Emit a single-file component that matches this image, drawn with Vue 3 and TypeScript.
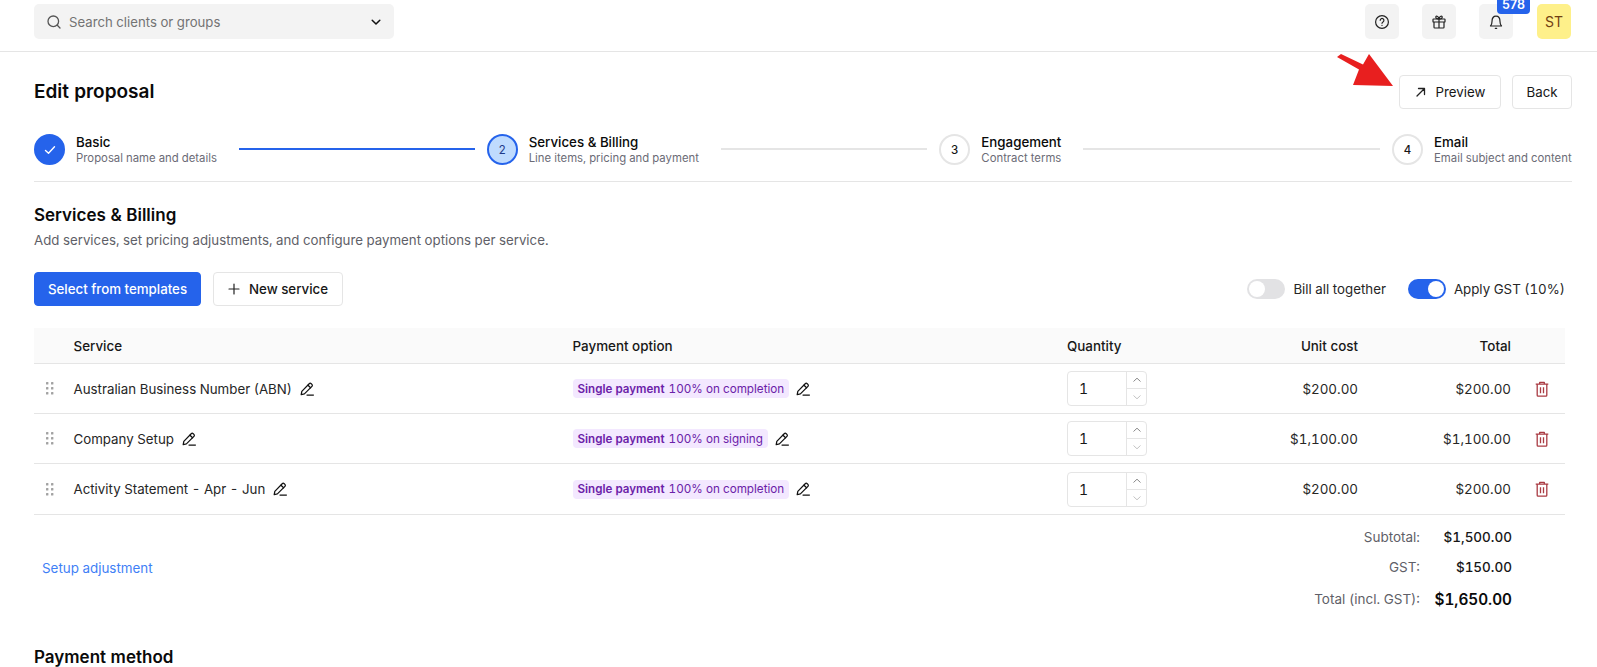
<script setup lang="ts">
interface Row { name: string; option: string; unit: string; total: string }
interface Step { n: number; title: string; sub: string; state: 'done' | 'active' | 'todo' }

const steps: Step[] = [
  { n: 1, title: 'Basic', sub: 'Proposal name and details', state: 'done' },
  { n: 2, title: 'Services & Billing', sub: 'Line items, pricing and payment', state: 'active' },
  { n: 3, title: 'Engagement', sub: 'Contract terms', state: 'todo' },
  { n: 4, title: 'Email', sub: 'Email subject and content', state: 'todo' },
]
const rows: Row[] = [
  { name: 'Australian Business Number (ABN)', option: '100% on completion', unit: '$200.00', total: '$200.00' },
  { name: 'Company Setup', option: '100% on signing', unit: '$1,100.00', total: '$1,100.00' },
  { name: 'Activity Statement - Apr - Jun', option: '100% on completion', unit: '$200.00', total: '$200.00' },
]
const dots = [[0, 0], [5, 0], [0, 5], [5, 5], [0, 10], [5, 10]]
</script>

<template>
  <div class="page">
    <header class="topbar">
      <div class="search">
        <svg class="search-ic" width="16" height="16" viewBox="0 0 16 16" fill="none" stroke="#555" stroke-width="1.3" stroke-linecap="round"><circle cx="7.3" cy="7.3" r="5.3"/><path d="M11.3 11.3 14 14"/></svg>
        <span class="search-text">Search clients or groups</span>
        <svg width="12" height="12" viewBox="0 0 12 12" fill="none" stroke="#111" stroke-width="1.5" stroke-linecap="round" stroke-linejoin="round"><path d="M2.2 4.2 6 8l3.8-3.8"/></svg>
      </div>
      <div class="top-actions">
        <button class="icon-btn">
          <svg width="16" height="16" viewBox="0 0 16 16" fill="none" stroke="#222" stroke-width="1.2" stroke-linecap="round"><circle cx="8" cy="8" r="6.4"/><path d="M6.2 6.3a1.85 1.85 0 1 1 2.8 1.6c-.6.4-1 .7-1 1.4"/><path d="M8 11.4v.1"/></svg>
        </button>
        <button class="icon-btn">
          <svg width="16" height="16" viewBox="0 0 16 16" fill="none" stroke="#222" stroke-width="1.2" stroke-linejoin="round"><rect x="2" y="5" width="12" height="3" rx=".6"/><path d="M3 8v5.2c0 .5.3.8.8.8h8.4c.5 0 .8-.3.8-.8V8M8 5v9M8 5C6.8 5 4.8 4.600 4.800 3.200 4.800 1.600 7.300 1.800 8 5Zm0 0c1.200 0 3.200-.4 3.200-1.800C11.200 1.600 8.700 1.800 8 5Z"/></svg>
        </button>
        <button class="icon-btn bell">
          <svg width="16" height="16" viewBox="0 0 16 16" fill="none" stroke="#222" stroke-width="1.2" stroke-linecap="round" stroke-linejoin="round"><path d="M2.500 12h11c-1-1-1.500-2-1.500-4.500C12 4.500 10.500 2.200 8 2.200S4 4.500 4 7.500C4 10 3.500 11 2.500 12Z"/><path d="M7.300 14.300h1.400"/></svg>
          <span class="badge">578</span>
        </button>
        <div class="avatar">ST</div>
      </div>
    </header>

    <main class="content">
      <div class="title-row">
        <h1>Edit proposal</h1>
        <div class="title-actions">
          <button class="btn preview">
            <svg width="12" height="12" viewBox="0 0 12 12" fill="none" stroke="#222" stroke-width="1.3" stroke-linecap="round" stroke-linejoin="round"><path d="M2 10 9.500 2.500M3.500 2.500h6v6"/></svg>
            Preview
          </button>
          <button class="btn back">Back</button>
        </div>
        <svg class="red-arrow" width="62" height="36" viewBox="0 0 62 36"><path d="M6 4 10 1 32 11.500 38 1 62 33 22 32 28 16.500Z" fill="#e81f1f"/></svg>
      </div>

      <div class="steps">
        <div v-for="s in steps" :key="s.n" class="step" :class="s.state">
          <div class="circle">
            <svg v-if="s.state === 'done'" width="14" height="14" viewBox="0 0 14 14" fill="none" stroke="#fff" stroke-width="1.400" stroke-linecap="round" stroke-linejoin="round"><path d="M2.500 7.500 5.500 10.300 11.500 3.800"/></svg>
            <span v-else>{{ s.n }}</span>
          </div>
          <div class="step-text">
            <div class="step-title">{{ s.title }}</div>
            <div class="step-sub">{{ s.sub }}</div>
          </div>
          <div v-if="s.n < 4" class="step-line"></div>
        </div>
      </div>

      <section class="section">
        <h2>Services &amp; Billing</h2>
        <p class="lead">Add services, set pricing adjustments, and configure payment options per service.</p>

        <div class="toolbar">
          <button class="btn primary">Select from templates</button>
          <button class="btn new">
            <svg width="12" height="12" viewBox="0 0 12 12" fill="none" stroke="#222" stroke-width="1.2" stroke-linecap="round"><path d="M6 1v10M1 6h10"/></svg>
            New service
          </button>
          <div class="toggles">
            <label class="toggle-wrap"><span class="toggle"><i></i></span>Bill all together</label>
            <label class="toggle-wrap"><span class="toggle on"><i></i></span>Apply GST (10%)</label>
          </div>
        </div>

        <div class="table">
          <div class="tr head">
            <div></div>
            <div>Service</div>
            <div>Payment option</div>
            <div>Quantity</div>
            <div class="num">Unit cost</div>
            <div class="num">Total</div>
            <div></div>
          </div>
          <div v-for="r in rows" :key="r.name" class="tr body">
            <div class="drag">
              <svg width="8" height="13" viewBox="0 0 8 13" fill="#a3a3a3"><rect v-for="(d, i) in dots" :key="i" :x="d[0]" :y="d[1]" width="2.400" height="2.400" rx=".5"/></svg>
            </div>
            <div class="cell-inline">
              <span>{{ r.name }}</span>
              <svg class="pencil" width="14" height="14" viewBox="0 0 14 14" fill="none" stroke="#111" stroke-width="1.250" stroke-linecap="round" stroke-linejoin="round"><path d="M1.200 12.600 1.800 9.400 9.200 1.700c.6-.6 1.400-.6 2 0l.7.7c.6.6.6 1.400 0 2l-7.500 7.500-3.200.7Z"/><path d="M8 3.200l2.600 2.600M7 13h6.400"/></svg>
            </div>
            <div class="cell-inline tight">
              <span class="tag"><b>Single payment</b>{{ r.option }}</span>
              <svg class="pencil" width="14" height="14" viewBox="0 0 14 14" fill="none" stroke="#111" stroke-width="1.250" stroke-linecap="round" stroke-linejoin="round"><path d="M1.200 12.600 1.800 9.400 9.200 1.700c.6-.6 1.400-.6 2 0l.7.7c.6.6.6 1.400 0 2l-7.500 7.500-3.200.7Z"/><path d="M8 3.200l2.600 2.600M7 13h6.400"/></svg>
            </div>
            <div>
              <div class="qty">
                <span class="qty-val">1</span>
                <div class="spin">
                  <span><svg width="10" height="6" viewBox="0 0 10 6" fill="none" stroke="#8a8a8a" stroke-width="1"><path d="M1.500 4.500 5 1.200l3.500 3.300"/></svg></span>
                  <span><svg width="10" height="6" viewBox="0 0 10 6" fill="none" stroke="#c4c4c4" stroke-width="1"><path d="M1.500 1.500 5 4.800l3.500-3.300"/></svg></span>
                </div>
              </div>
            </div>
            <div class="num">{{ r.unit }}</div>
            <div class="num">{{ r.total }}</div>
            <div class="del">
              <svg width="14" height="16" viewBox="0 0 14 16" fill="none" stroke="#a93a42" stroke-width="1.300" stroke-linejoin="round"><path d="M.7 3.200h12.600M4.700 3V1.300h4.600V3M2.200 3.200v11.100c0 .5.300.9.900.9h7.800c.6 0 .9-.4.900-.9V3.200M5.500 6.200v6M8.500 6.200v6"/></svg>
            </div>
          </div>
        </div>

        <div class="summary-row">
          <a class="setup">Setup adjustment</a>
          <div class="summary">
            <div class="line"><span class="lbl">Subtotal:</span><span class="val">$1,500.00</span></div>
            <div class="line"><span class="lbl">GST:</span><span class="val">$150.00</span></div>
            <div class="line grand"><span class="lbl">Total (incl. GST):</span><span class="val">$1,650.00</span></div>
          </div>
        </div>

        <h2 class="pm">Payment method</h2>
      </section>
    </main>
  </div>
</template>

<style>
html, body { margin: 0; height: 667px; overflow: hidden; background: #fff; }
</style>

<style scoped>
.page { font-family: Inter, "Noto Sans", sans-serif; color: #171717; font-size: 13.300px; background: #fff; font-variant-numeric: tabular-nums; }
button { font-family: inherit; cursor: pointer; }

.topbar { height: 51px; box-sizing: content-box; border-bottom: 1px solid #e5e5e5; display: flex; align-items: flex-start; justify-content: space-between; padding: 0 26px 0 34px; }
.search { margin-top: 4px; width: 360px; height: 35px; box-sizing: border-box; background: #f3f3f3; border-radius: 5px; display: flex; align-items: center; padding: 0 12px; gap: 7px; }
.search-text { flex: 1; color: #737373; font-size: 13.200px; }
.top-actions { display: flex; gap: 23px; margin-top: 4px; }
.icon-btn { width: 34px; height: 35px; padding: 0; border: 0; background: #f3f3f3; border-radius: 5px; display: flex; align-items: center; justify-content: center; position: relative; }
.badge { position: absolute; top: -9px; left: 18px; width: 33px; height: 18.500px; background: #2563eb; color: #fff; font-size: 12.500px; font-weight: 600; border-radius: 4px; display: flex; align-items: center; justify-content: center; }
.avatar { margin-left: 1px; width: 34px; height: 35px; background: #fef08a; border-radius: 5px; color: #713f12; font-size: 14px; display: flex; align-items: center; justify-content: center; }

.content { padding: 23px 25px 0 34px; }
.title-row { display: flex; align-items: center; justify-content: space-between; height: 34px; position: relative; }
h1 { margin: 0 0 2px; font-size: 19px; font-weight: 600; color: #0a0a0a; }
.title-actions { display: flex; gap: 11px; }
.btn { height: 34px; box-sizing: border-box; border: 1px solid #e5e5e5; border-radius: 4px; background: #fff; color: #171717; font-size: 13.300px; padding: 0 14px; display: inline-flex; align-items: center; }
.preview { width: 102px; padding: 0 0 0 15px; gap: 8.500px; }
.preview svg { flex: none; }
.back { width: 60px; padding: 0; justify-content: center; }
.red-arrow { position: absolute; right: 179px; top: -22px; }

.steps { display: flex; margin-top: 24px; padding-bottom: 15px; border-bottom: 1px solid #e5e5e5; }
.step { flex: 1 1 0; display: flex; align-items: flex-start; min-width: 0; }
.step:last-child { flex: 0 0 180px; }
.circle { flex: none; width: 31px; height: 31px; margin-top: 1px; box-sizing: border-box; border-radius: 50%; border: 2px solid #e5e5e5; display: flex; align-items: center; justify-content: center; font-size: 11.500px; font-weight: 500; }
.done .circle { background: #2563eb; border-color: #2563eb; }
.active .circle { background: #bfdbfe; border-color: #2563eb; color: #1e3a8a; font-weight: 400; }
.step-text { margin-left: 11px; white-space: nowrap; }
.step-title { font-size: 13.300px; font-weight: 500; line-height: 18px; color: #0a0a0a; }
.step-sub { font-size: 11.350px; line-height: 15px; color: #6b6b76; }
.step-line { flex: 1; height: 2px; background: #e5e5e5; margin: 15px 12px 0 22px; }
.done .step-line { background: #2563eb; }

.section { padding-right: 7px; }
h2 { margin: 23px 0 0; font-size: 17px; line-height: 20px; font-weight: 600; color: #0a0a0a; }
.lead { margin: 6px 0 0; font-size: 13.270px; line-height: 18px; color: #5f5f68; }
.toolbar { display: flex; align-items: center; gap: 12px; margin-top: 23px; }
.primary { background: #2563eb; border-color: #2563eb; color: #fff; font-weight: 500; width: 167px; justify-content: center; padding: 0; }
.new { width: 130px; padding: 0; gap: 9px; justify-content: center; font-weight: 500; }
.toggles { margin-left: auto; display: flex; gap: 22px; }
.toggle-wrap { display: flex; align-items: center; gap: 8px; font-size: 13.300px; color: #262626; }
.toggle { width: 38px; height: 20px; background: #e2e2e4; border-radius: 10px; position: relative; display: block; }
.toggle i { position: absolute; left: 2px; top: 2px; width: 16px; height: 16px; background: #fff; border-radius: 50%; }
.toggle.on { background: #2563eb; }
.toggle.on i { left: 20px; }

.table { margin-top: 22px; }
.tr { display: grid; grid-template-columns: 39.500px 499px 494.500px 130px 161px 153px 54px; align-items: center; border-bottom: 1px solid #e5e5e5; }
.head { height: 35px; background: #fafafa; font-weight: 500; font-size: 13.400px; color: #171717; }
.body { height: 49px; color: #262626; font-size: 13.400px; }
.body:last-child { height: 50px; }
.num { text-align: right; }
.drag { display: flex; padding-left: 12px; }
.cell-inline { display: flex; align-items: center; gap: 8px; font-size: 13.300px; }
.cell-inline.tight { gap: 7px; }
.tag { background: #f3e8ff; color: #6b21a8; border-radius: 4px; font-size: 11.700px; height: 19px; display: inline-flex; align-items: center; padding: 0 5px; white-space: nowrap; gap: 4px; }
.tag b { font-weight: 600; font-size: 11.600px; }
.pencil { flex: none; }
.qty { width: 80px; height: 35px; box-sizing: border-box; border: 1px solid #e5e5e5; border-radius: 4px; display: flex; }
.qty-val { flex: 1; display: flex; align-items: center; padding-left: 11px; font-size: 14px; color: #171717; }
.spin { width: 19px; border-left: 1px solid #e5e5e5; display: flex; flex-direction: column; }
.spin span { flex: 1; display: flex; align-items: center; justify-content: center; }
.spin span + span { border-top: 1px solid #e5e5e5; }
.del { display: flex; justify-content: flex-end; padding-right: 16px; }

.summary-row { display: flex; justify-content: space-between; align-items: center; padding-right: 53px; margin-top: 7px; }
.setup { color: #3f7ff6; font-size: 13.400px; margin: 0 0 2px 8px; }
.summary { display: flex; flex-direction: column; }
.line { display: flex; justify-content: flex-end; align-items: center; height: 30px; font-size: 13.500px; }
.lbl { color: #5f5f68; font-size: 13.500px; }
.val { width: 92px; text-align: right; color: #171717; font-weight: 500; }
.grand { height: 34px; }
.grand .val { font-size: 15.300px; font-weight: 600; color: #0a0a0a; }
.pm { margin-top: 31px; }
</style>
